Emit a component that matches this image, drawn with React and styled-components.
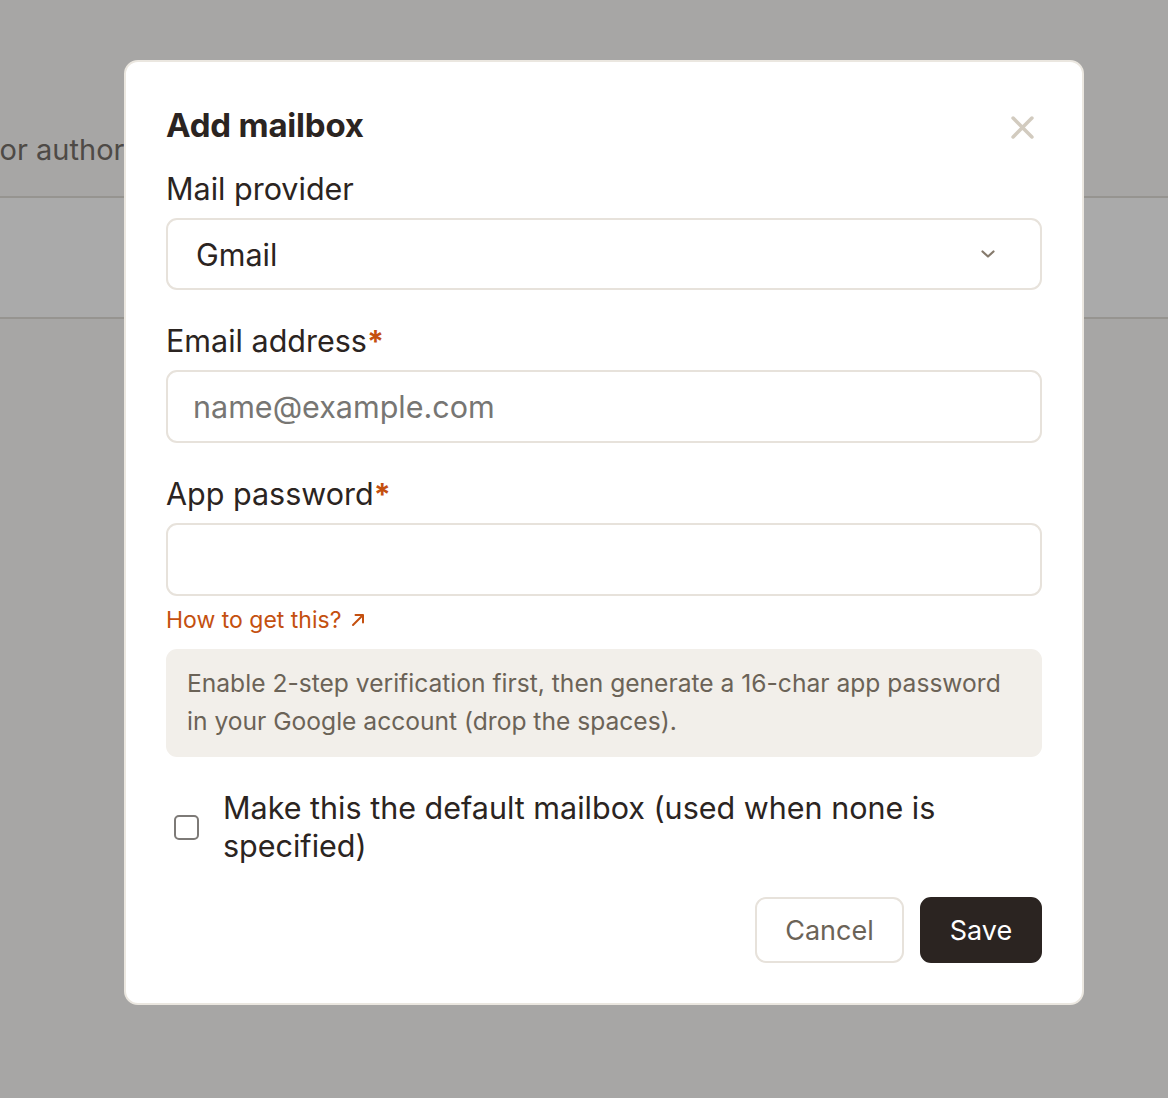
import React from 'react';
import styled, { createGlobalStyle } from 'styled-components';

const GlobalStyle = createGlobalStyle`
  html, body {
    margin: 0;
    padding: 0;
    background: #fbfaf8;
    font-family: Inter, "Noto Sans", "Liberation Sans", sans-serif;
  }
`

const App = () => {
  return (
    <>
      <GlobalStyle />
      <Page>
        <PageIntro>
          <IntroText>Connect the mailboxes your agents use for sending or authorizing</IntroText>
        </PageIntro>
        <TableBand />
      </Page>
      <Overlay>
        <Modal>
          <Header>
            <Title>Add mailbox</Title>
            <CloseButton aria-label="Close">
              <svg width="23" height="23" viewBox="0 0 22 22" fill="none">
                <path d="M2 2L20 20M20 2L2 20" stroke="#d2cbbf" strokeWidth="3.4" strokeLinecap="round" />
              </svg>
            </CloseButton>
          </Header>

          <Field>
            <Label>Mail provider</Label>
            <SelectBox type="button">
              <span>Gmail</span>
              <svg width="16" height="10" viewBox="0 0 16 10" fill="none">
                <path d="M2.5 2.5L8 7.5L13.5 2.5" stroke="#857a6c" strokeWidth="2.2" strokeLinecap="round" strokeLinejoin="round" />
              </svg>
            </SelectBox>
          </Field>

          <Field>
            <Label>Email address<Required>*</Required></Label>
            <Input type="email" placeholder="name@example.com" />
          </Field>

          <Field>
            <Label>App password<Required>*</Required></Label>
            <Input type="password" />
            <HelpLink href="#">
              How to get this?
              <svg width="16" height="16" viewBox="0 0 16 16" fill="none">
                <path d="M3 13L13 3M5.5 3H13V10.5" stroke="#c4500f" strokeWidth="2" strokeLinecap="round" strokeLinejoin="round" />
              </svg>
            </HelpLink>
            <InfoBox>
              Enable 2-step verification first, then generate a 16-char app password
              in your Google account (drop the spaces).
            </InfoBox>
          </Field>

          <CheckRow>
            <CheckBox />
            <CheckLabel>Make this the default mailbox (used when none is specified)</CheckLabel>
          </CheckRow>

          <Footer>
            <GhostButton>Cancel</GhostButton>
            <PrimaryButton>Save</PrimaryButton>
          </Footer>
        </Modal>
      </Overlay>
    </>
  )
}

export default App

const Page = styled.div`
  width: 1168px;
  height: 1098px;
  overflow: hidden;
  background: #fbfaf8;
`
const PageIntro = styled.div`
  height: 198px;
  display: flex;
  align-items: flex-start;
  padding-top: 130px;
  box-sizing: border-box;
  border-bottom: 2px solid #e2ded8;
  overflow: hidden;
`
const IntroText = styled.p`
  margin: 0 0 0 -713px;
  white-space: nowrap;
  font-size: 29px;
  line-height: 40px;
  color: #76706a;
`
const TableBand = styled.div`
  height: 119px;
  background: #ffffff;
  border-bottom: 2px solid #e2ded8;
`
const Overlay = styled.div`
  position: fixed;
  inset: 0;
  background: rgba(0, 0, 0, 0.335);
  display: flex;
  justify-content: center;
  align-items: flex-start;
  padding: 60px 0 0 40px;
`
const Modal = styled.div`
  width: 960px;
  box-sizing: border-box;
  background: #ffffff;
  border: 2px solid #ebe7e0;
  border-radius: 14px;
  padding: 43px 40px 40px;
  display: flex;
  flex-direction: column;
  color: #2b2421;
`
const Header = styled.div`
  display: flex;
  justify-content: space-between;
  align-items: center;
  margin-bottom: 25px;
`
const Title = styled.h2`
  margin: 0;
  font-size: 33px;
  line-height: 40px;
  font-weight: 700;
  letter-spacing: -0.2px;
  color: #2b2421;
`
const CloseButton = styled.button`
  border: none;
  background: none;
  padding: 0;
  margin-right: 8px;
  margin-top: 4px;
  display: flex;
  cursor: pointer;
`
const Field = styled.div`
  display: flex;
  flex-direction: column;
  margin-bottom: 32px;
`
const Label = styled.label`
  font-size: 30.5px;
  line-height: 38px;
  color: #2b2421;
  margin-bottom: 10px;
`
const Required = styled.span`
  color: #c4500f;
  font-weight: 700;
`
const SelectBox = styled.button`
  height: 72px;
  box-sizing: border-box;
  border: 2px solid #e7e2db;
  border-radius: 11px;
  background: #fff;
  padding: 0 44px 0 28px;
  display: flex;
  align-items: center;
  justify-content: space-between;
  font-family: inherit;
  font-size: 30.5px;
  color: #2b2421;
  cursor: pointer;
`
const Input = styled.input`
  height: 73px;
  box-sizing: border-box;
  border: 2px solid #e7e2db;
  border-radius: 11px;
  background: #fff;
  padding: 0 25px;
  font-family: inherit;
  font-size: 30.5px;
  color: #2b2421;
  outline: none;
  &::placeholder {
    color: #777673;
  }
`
const HelpLink = styled.a`
  margin-top: 8px;
  display: flex;
  align-items: center;
  gap: 9px;
  font-size: 23px;
  line-height: 32px;
  color: #c4500f;
  text-decoration: none;
  align-self: flex-start;
`
const InfoBox = styled.div`
  margin-top: 13px;
  background: #f2efea;
  border-radius: 11px;
  padding: 15px 21px 17px;
  font-size: 24.6px;
  line-height: 38px;
  color: #6b6357;
`
const CheckRow = styled.label`
  display: flex;
  align-items: center;
  gap: 24px;
  padding-left: 8px;
  margin-bottom: 32px;
`
const CheckBox = styled.span`
  flex: none;
  width: 25px;
  height: 25px;
  box-sizing: border-box;
  border: 2px solid #7d7a77;
  border-radius: 5px;
  background: #fff;
`
const CheckLabel = styled.span`
  font-size: 30.5px;
  line-height: 38px;
  color: #2b2421;
`
const Footer = styled.div`
  display: flex;
  justify-content: flex-end;
  gap: 16px;
`
const GhostButton = styled.button`
  height: 66px;
  width: 149px;
  box-sizing: border-box;
  border: 2px solid #e7e2db;
  border-radius: 11px;
  background: #fff;
  font-family: inherit;
  font-size: 27px;
  color: #6b6357;
  cursor: pointer;
`
const PrimaryButton = styled(GhostButton)`
  width: 122px;
  border-color: #2b2421;
  background: #2b2421;
  color: #ffffff;
`
